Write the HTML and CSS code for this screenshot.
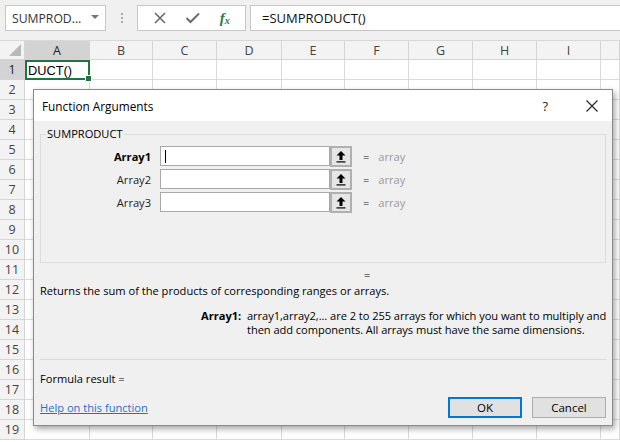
FILE: index.html
```html
<!DOCTYPE html>
<html>
<head>
<meta charset="utf-8">
<link rel="stylesheet" href="styles.css">
</head>
<body>
<div class="app">
  <div class="toolbar">
    <div class="namebox"><span>SUMPROD...</span><span class="caret"></span></div>
    <div class="grip"><i></i><i></i><i></i></div>
    <div class="fxbox">
      <svg class="ico" width="14" height="14" viewBox="0 0 14 14"><path d="M2 2 L12 12 M12 2 L2 12" stroke="#6b6b6b" stroke-width="1.6" fill="none"/></svg>
      <svg class="ico" width="16" height="14" viewBox="0 0 16 14"><path d="M1.5 7 L5.5 11 L14 2.5" stroke="#6b6b6b" stroke-width="2" fill="none"/></svg>
      <span class="fx">f<sub>x</sub></span>
    </div>
    <div class="formula">=SUMPRODUCT()</div>
  </div>
  <div class="sheet">
    <div class="hdr corner"><span class="tri"></span></div>
    <div class="hdr col sel">A</div><div class="hdr col">B</div><div class="hdr col">C</div><div class="hdr col">D</div><div class="hdr col">E</div><div class="hdr col">F</div><div class="hdr col">G</div><div class="hdr col">H</div><div class="hdr col">I</div><div class="hdr col"></div>

    <div class="hdr rown sel">1</div><div class="cell active">DUCT()</div><div class="cell"></div><div class="cell"></div><div class="cell"></div><div class="cell"></div><div class="cell"></div><div class="cell"></div><div class="cell"></div><div class="cell"></div><div class="cell"></div>
    <div class="hdr rown">2</div><div class="cell"></div><div class="cell"></div><div class="cell"></div><div class="cell"></div><div class="cell"></div><div class="cell"></div><div class="cell"></div><div class="cell"></div><div class="cell"></div><div class="cell"></div>
    <div class="hdr rown">3</div><div class="cell"></div><div class="cell"></div><div class="cell"></div><div class="cell"></div><div class="cell"></div><div class="cell"></div><div class="cell"></div><div class="cell"></div><div class="cell"></div><div class="cell"></div>
    <div class="hdr rown">4</div><div class="cell"></div><div class="cell"></div><div class="cell"></div><div class="cell"></div><div class="cell"></div><div class="cell"></div><div class="cell"></div><div class="cell"></div><div class="cell"></div><div class="cell"></div>
    <div class="hdr rown">5</div><div class="cell"></div><div class="cell"></div><div class="cell"></div><div class="cell"></div><div class="cell"></div><div class="cell"></div><div class="cell"></div><div class="cell"></div><div class="cell"></div><div class="cell"></div>
    <div class="hdr rown">6</div><div class="cell"></div><div class="cell"></div><div class="cell"></div><div class="cell"></div><div class="cell"></div><div class="cell"></div><div class="cell"></div><div class="cell"></div><div class="cell"></div><div class="cell"></div>
    <div class="hdr rown">7</div><div class="cell"></div><div class="cell"></div><div class="cell"></div><div class="cell"></div><div class="cell"></div><div class="cell"></div><div class="cell"></div><div class="cell"></div><div class="cell"></div><div class="cell"></div>
    <div class="hdr rown">8</div><div class="cell"></div><div class="cell"></div><div class="cell"></div><div class="cell"></div><div class="cell"></div><div class="cell"></div><div class="cell"></div><div class="cell"></div><div class="cell"></div><div class="cell"></div>
    <div class="hdr rown">9</div><div class="cell"></div><div class="cell"></div><div class="cell"></div><div class="cell"></div><div class="cell"></div><div class="cell"></div><div class="cell"></div><div class="cell"></div><div class="cell"></div><div class="cell"></div>
    <div class="hdr rown">10</div><div class="cell"></div><div class="cell"></div><div class="cell"></div><div class="cell"></div><div class="cell"></div><div class="cell"></div><div class="cell"></div><div class="cell"></div><div class="cell"></div><div class="cell"></div>
    <div class="hdr rown">11</div><div class="cell"></div><div class="cell"></div><div class="cell"></div><div class="cell"></div><div class="cell"></div><div class="cell"></div><div class="cell"></div><div class="cell"></div><div class="cell"></div><div class="cell"></div>
    <div class="hdr rown">12</div><div class="cell"></div><div class="cell"></div><div class="cell"></div><div class="cell"></div><div class="cell"></div><div class="cell"></div><div class="cell"></div><div class="cell"></div><div class="cell"></div><div class="cell"></div>
    <div class="hdr rown">13</div><div class="cell"></div><div class="cell"></div><div class="cell"></div><div class="cell"></div><div class="cell"></div><div class="cell"></div><div class="cell"></div><div class="cell"></div><div class="cell"></div><div class="cell"></div>
    <div class="hdr rown">14</div><div class="cell"></div><div class="cell"></div><div class="cell"></div><div class="cell"></div><div class="cell"></div><div class="cell"></div><div class="cell"></div><div class="cell"></div><div class="cell"></div><div class="cell"></div>
    <div class="hdr rown">15</div><div class="cell"></div><div class="cell"></div><div class="cell"></div><div class="cell"></div><div class="cell"></div><div class="cell"></div><div class="cell"></div><div class="cell"></div><div class="cell"></div><div class="cell"></div>
    <div class="hdr rown">16</div><div class="cell"></div><div class="cell"></div><div class="cell"></div><div class="cell"></div><div class="cell"></div><div class="cell"></div><div class="cell"></div><div class="cell"></div><div class="cell"></div><div class="cell"></div>
    <div class="hdr rown">17</div><div class="cell"></div><div class="cell"></div><div class="cell"></div><div class="cell"></div><div class="cell"></div><div class="cell"></div><div class="cell"></div><div class="cell"></div><div class="cell"></div><div class="cell"></div>
    <div class="hdr rown">18</div><div class="cell"></div><div class="cell"></div><div class="cell"></div><div class="cell"></div><div class="cell"></div><div class="cell"></div><div class="cell"></div><div class="cell"></div><div class="cell"></div><div class="cell"></div>
    <div class="hdr rown">19</div><div class="cell"></div><div class="cell"></div><div class="cell"></div><div class="cell"></div><div class="cell"></div><div class="cell"></div><div class="cell"></div><div class="cell"></div><div class="cell"></div><div class="cell"></div>
  </div>

  <div class="dialog">
    <div class="titlebar">
      <span class="title">Function Arguments</span>
      <span class="help">?</span>
      <svg class="close" width="12" height="12" viewBox="0 0 12 12"><path d="M0.5 0.5 L11.5 11.5 M11.5 0.5 L0.5 11.5" stroke="#222" stroke-width="1.1" fill="none"/></svg>
    </div>
    <div class="body">
      <fieldset class="group">
        <legend>SUMPRODUCT</legend>
        <div class="args">
          <div class="arg">
            <span class="lbl bold">Array1</span>
            <span class="input"><span class="cursor"></span></span>
            <span class="btn"><svg width="12" height="13" viewBox="0 0 12 13"><path d="M6 1 L10.5 5.5 L7.5 5.5 L7.5 10 L4.5 10 L4.5 5.5 L1.5 5.5 Z" fill="#000"/><rect x="1.5" y="11.3" width="9" height="1.2" fill="#000"/></svg></span>
            <span class="eq">=</span><span class="val">array</span>
          </div>
          <div class="arg">
            <span class="lbl">Array2</span>
            <span class="input"></span>
            <span class="btn"><svg width="12" height="13" viewBox="0 0 12 13"><path d="M6 1 L10.5 5.5 L7.5 5.5 L7.5 10 L4.5 10 L4.5 5.5 L1.5 5.5 Z" fill="#000"/><rect x="1.5" y="11.3" width="9" height="1.2" fill="#000"/></svg></span>
            <span class="eq">=</span><span class="val">array</span>
          </div>
          <div class="arg">
            <span class="lbl">Array3</span>
            <span class="input"></span>
            <span class="btn"><svg width="12" height="13" viewBox="0 0 12 13"><path d="M6 1 L10.5 5.5 L7.5 5.5 L7.5 10 L4.5 10 L4.5 5.5 L1.5 5.5 Z" fill="#000"/><rect x="1.5" y="11.3" width="9" height="1.2" fill="#000"/></svg></span>
            <span class="eq">=</span><span class="val">array</span>
          </div>
        </div>
      </fieldset>
      <div class="result-eq">=</div>
      <p class="desc">Returns the sum of the products of corresponding ranges or arrays.</p>
      <div class="argdesc">
        <span class="argname">Array1:</span>
        <span class="argtext">array1,array2,... are 2 to 255 arrays for which you want to multiply and then add components. All arrays must have the same dimensions.</span>
      </div>
      <hr class="sep">
      <div class="fres">Formula result =</div>
      <div class="footer">
        <a class="link" href="#">Help on this function</a>
        <div class="buttons">
          <span class="pbtn ok">OK</span>
          <span class="pbtn">Cancel</span>
        </div>
      </div>
    </div>
  </div>
</div>
</body>
</html>
```
FILE: styles.css
```css
* { box-sizing: border-box; }
html, body { margin: 0; padding: 0; }
body {
  width: 620px; height: 442px; overflow: hidden;
  font-family: "Open Sans", "Noto Sans", sans-serif;
  background: #fff;
}
.app { position: relative; width: 620px; height: 442px; overflow: hidden; }

.toolbar {
  height: 41px; background: #f0f0f0;
  display: flex; align-items: flex-start; padding: 5px 0 0 5px;
  border-bottom: 1px solid #d8d8d8;
}
.namebox {
  width: 101px; height: 26px; background: #fff; border: 1px solid #c6c6c6;
  display: flex; align-items: center; justify-content: space-between;
  padding: 0 6px 0 6px; font-size: 12.2px; color: #333;
}
.caret {
  width: 0; height: 0; border-left: 4px solid transparent; border-right: 4px solid transparent;
  border-top: 4px solid #777; margin-top: -2px;
}
.grip { width: 31px; height: 26px; display: flex; flex-direction: column; align-items: center; justify-content: center; gap: 2px; }
.grip i { width: 2px; height: 2px; background: #aaa; display: block; }
.fxbox {
  width: 109px; height: 26px; background: #fff; border: 1px solid #c6c6c6;
  display: flex; align-items: center; justify-content: space-around; padding: 0 6px 0 6px;
}
.fx { font-family: "Liberation Serif", serif; font-style: italic; color: #2c7a4b; font-size: 15px; font-weight: bold; line-height: 1; }
.fx sub { font-size: 10px; vertical-align: -1px; }
.formula {
  margin-left: 4px; flex: 1; height: 26px; background: #fff; border: 1px solid #c6c6c6; border-right: none;
  display: flex; align-items: center; padding-left: 11px; font-size: 13px; color: #111;
}

.sheet {
  display: grid;
  grid-template-columns: 25px 65px 63px 64px 65px 63px 64px 64px 64px 64px 19px;
  grid-auto-rows: 20px;
  grid-template-rows: 19px;
}
.hdr {
  background: #f3f3f3; color: #444; font-size: 12.5px;
  display: flex; align-items: center; justify-content: center;
  border-right: 1px solid #d5d5d5; border-bottom: 1px solid #d5d5d5;
}
.hdr.sel { background: #d3d3d3; color: #222; }
.corner { align-items: flex-end; justify-content: flex-end; padding: 0 3px 3px 0; }
.tri { width: 0; height: 0; border-left: 12px solid transparent; border-bottom: 12px solid #b8b8b8; }
.cell { border-right: 1px solid #dadada; border-bottom: 1px solid #dadada; }
.cell.active {
  border: 2px solid #217346; position: relative;
  font-family: "Liberation Sans", sans-serif; font-size: 12.8px; color: #000;
  display: flex; align-items: center; padding-left: 1px;
}
.cell.active::after {
  content: ""; position: absolute; right: -4px; bottom: -4px; width: 5px; height: 5px;
  background: #217346; border: 1px solid #fff;
}

.dialog {
  position: absolute; left: 33px; top: 89px; width: 580px; height: 337px;
  background: #f0f0f0; border: 1px solid #8a8a8a;
  box-shadow: 2px 3px 6px rgba(0,0,0,0.35);
  font-size: 11.1px; color: #000;
}
.titlebar {
  height: 31px; background: #fff; display: flex; align-items: center; padding: 0 0 0 8px;
}
.title { font-size: 11.8px; flex: 1; color: #000; }
.help { font-size: 13px; margin-right: 38px; color: #222; }
.close { margin-right: 14px; }
.body { padding: 0 6px 0 6px; }
.group {
  margin: 6px 0 0 0; padding: 0; height: 136px;
  border: 1px solid #dcdcdc; border-radius: 0;
}
.group legend { padding: 0 1px; margin-left: 5px; line-height: 14px; }
.args { display: flex; flex-direction: column; gap: 3px; padding-top: 5px; }
.arg { display: flex; align-items: center; height: 20px; }
.lbl { width: 119px; text-align: right; padding-right: 9px; color: #222; }
.lbl.bold { font-weight: bold; color: #000; }
.input { width: 170px; height: 20px; background: #fff; border: 1px solid #a8a8a8; position: relative; }
.cursor { position: absolute; left: 4px; top: 3px; width: 1px; height: 13px; background: #000; }
.btn {
  width: 22px; height: 21px; background: #e6e6e6; border: 2px solid #b0b0b0;
  display: flex; align-items: center; justify-content: center;
}
.eq { margin-left: 11px; color: #222; }
.val { margin-left: 9px; color: #9a9a9a; }
.result-eq { margin: 5px 0 0 324px; height: 14px; line-height: 14px; }
.desc { margin: 2px 0 0 0; line-height: 14px; }
.argdesc { display: flex; margin-top: 11px; padding-left: 161px; line-height: 14px; }
.argname { width: 46px; font-weight: bold; flex: none; }
.argtext { width: 366px; flex: none; letter-spacing: -0.05px; }
.sep { margin: 22px 0 0 0; border: none; border-top: 1px solid #dadada; }
.fres { margin-top: 12px; line-height: 14px; }
.footer { display: flex; justify-content: space-between; align-items: center; margin-top: 11px; }
.link { color: #2a6fc0; text-decoration: underline; }
.buttons { display: flex; gap: 10px; }
.pbtn {
  width: 74px; height: 21px; border: 1px solid #adadad; background: #e1e1e1;
  display: flex; align-items: center; justify-content: center; font-size: 11.5px;
}
.pbtn.ok { border: 2px solid #0078d7; }
```
